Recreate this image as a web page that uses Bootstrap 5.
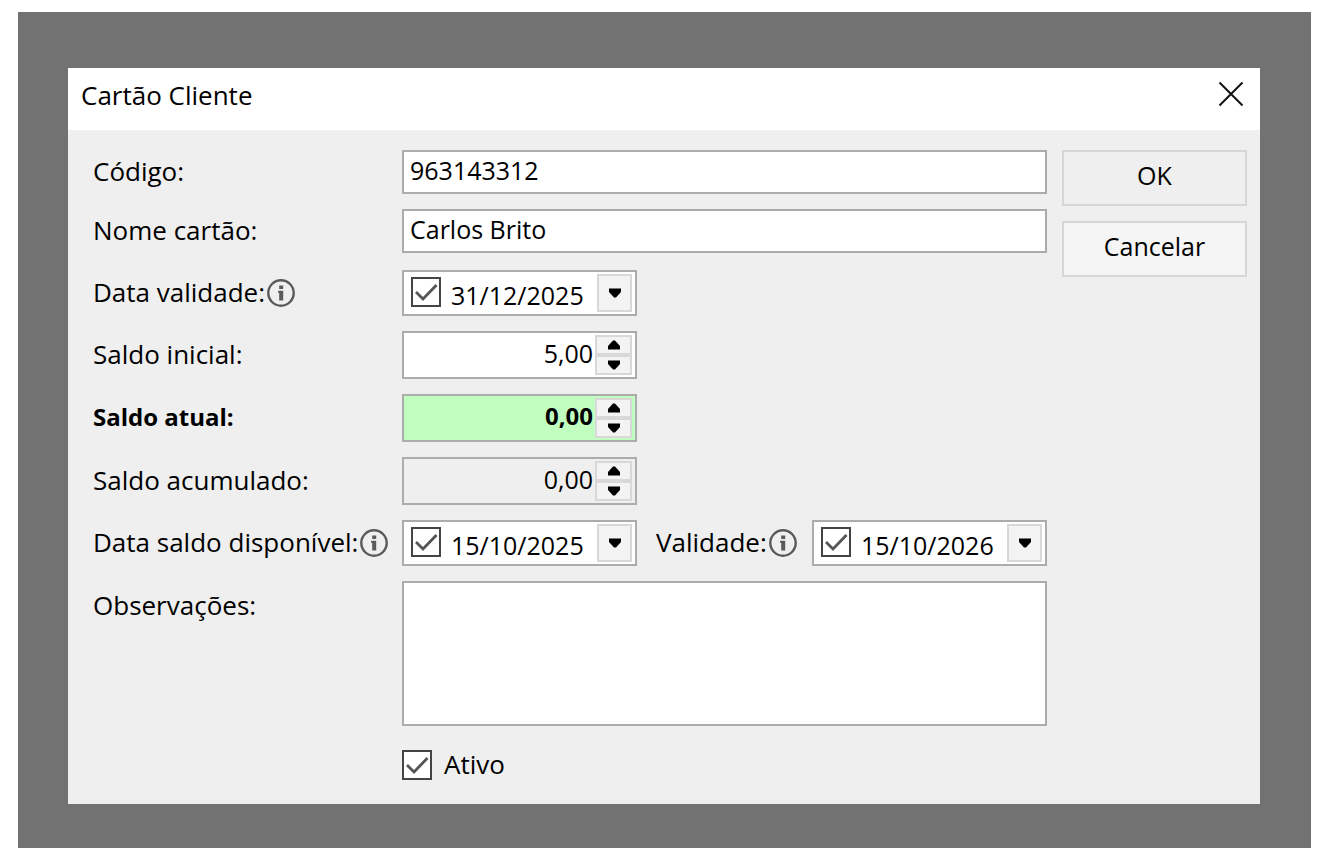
<!DOCTYPE html>
<html lang="pt">
<head>
<meta charset="utf-8">
<meta name="viewport" content="width=device-width, initial-scale=1">
<title>Cartão Cliente</title>
<link rel="stylesheet" href="https://cdn.jsdelivr.net/npm/bootstrap@5.3.0/dist/css/bootstrap.min.css">
<style>
  body { font-family: "Open Sans", "Noto Sans", sans-serif; font-size: 26px; line-height: 32px; color: #000; background: #fff; }
  .backdrop-area { background: #727272; margin: 12px 12px 12px 18px; padding: 56px 51px 44px 50px; }
  .dialog-window { background: #efefef; }
  .dialog-title { background: #fff; height: 62px; padding: 0 15px 9px 13px; }
  .dialog-title h1 { font-size: 26px; line-height: 32px; }
  .close-btn { line-height: 0; }
  .dialog-body { padding: 20px 13px 22px 25px; gap: 15px; }
  .form-rows { gap: 15px; min-width: 0; }
  .label-col { flex: 0 0 309px; white-space: nowrap; }
  .form-rows label { margin-bottom: 2px; }
  .label-strong { font-size: 24px; }
  .side-label { margin-left: 19px; white-space: nowrap; }
  .info-icon { width: 28px; height: 28px; margin-left: 2px; flex: none; }
  .form-control.win-input { height: 44px; padding: 0 6px 4px; font-size: 25px; line-height: 32px; color: #000; border: 2px solid #acacac; border-radius: 0; background: #fff; }
  textarea.form-control.win-input { height: 145px; resize: none; }
  .win-field { width: 235px; border: 2px solid #acacac; background: #fff; font-size: 25px; }
  .win-field input[type=text] { min-width: 0; flex: 1 1 0; border: 0; padding: 0; background: transparent; color: inherit; font: inherit; outline: 0; }
  .date-field { height: 46px; padding: 0 3px 0 7px; }
  .date-field input[type=text] { margin-left: 10px; padding-top: 3px; }
  .spin-field { height: 48px; padding: 0 3px; }
  .spin-field input[type=text] { text-align: right; padding: 0 2px 5px 0; }
  .current { background: #c0ffc0; font-size: 24px; }
  .readonly-field { background: #efefef; }
  .group-start { margin-top: 2px; }
  .form-check-input.win-check { width: 30px; height: 30px; margin: 0; border: 2px solid #444; border-radius: 0; background-color: #fff; flex: none; }
  .form-check-input.win-check:checked { background-color: #fff; border-color: #444; background-size: 26px 26px; background-image: url("data:image/svg+xml,%3Csvg xmlns='http://www.w3.org/2000/svg' viewBox='0 0 26 26'%3E%3Cpath d='M3 13l7 7L23.500 6' fill='none' stroke='%23555' stroke-width='2.800'/%3E%3C/svg%3E"); }
  .date-field .win-check { margin-bottom: 3px; }
  .small-btn { display: flex; align-items: center; justify-content: center; padding: 0; border: 2px solid #d8d8d8; border-radius: 0; background: #f3f3f3; }
  .drop-btn { width: 35px; height: 38px; }
  .spin-btn { width: 37px; height: 20px; }
  .btn.win-btn { width: 185px; height: 56px; padding: 0 0 7px; font-size: 25px; line-height: 32px; color: #000; border: 2px solid #d6d6d6; border-radius: 0; background: #efefef; }
  .btn.win-btn-light { background: #f5f5f5; }
  .active-line { margin-top: 7px; padding-left: 309px; gap: 12px; }
</style>
</head>
<body>
<svg class="d-none" aria-hidden="true">
  <symbol id="i-info" viewBox="0 0 28 28"><circle cx="14" cy="14" r="12.700" fill="none" stroke="#5a5a5a" stroke-width="2.400"/><path d="M12.200 6.500h4v3.500h-4zM11.200 11.800h5v9.700h-4v-7.500h-1z" fill="#5a5a5a"/></symbol>
  <symbol id="i-down" viewBox="0 0 12 10"><path d="M0 .5h12v3.500L7 9.500H5L0 4z"/></symbol>
  <symbol id="i-up" viewBox="0 0 12 10"><path d="M0 9.500h12V6L7 .5H5L0 6z"/></symbol>
</svg>
<main class="backdrop-area">
  <section class="dialog-window" role="dialog" aria-labelledby="dlg-title">
    <header class="dialog-title d-flex align-items-center justify-content-between">
      <h1 id="dlg-title" class="m-0 fw-normal">Cartão Cliente</h1>
      <button type="button" class="close-btn border-0 bg-transparent p-0" aria-label="Fechar">
        <svg width="28" height="30" viewBox="0 0 28 30"><path d="M2.500 2.500l23 23M25.500 2.500l-23 23" stroke="#111" stroke-width="2"/></svg>
      </button>
    </header>
    <form class="dialog-body d-flex align-items-start">
      <div class="form-rows flex-grow-1 d-flex flex-column">
        <div class="d-flex align-items-center">
          <label class="label-col" for="codigo">Código:</label>
          <input id="codigo" type="text" class="form-control win-input" value="963143312">
        </div>
        <div class="d-flex align-items-center">
          <label class="label-col" for="nome">Nome cartão:</label>
          <input id="nome" type="text" class="form-control win-input" value="Carlos Brito">
        </div>
        <div class="d-flex align-items-center group-start">
          <div class="label-col d-flex align-items-center"><label for="validade-cartao">Data validade:</label><svg class="info-icon"><use href="#i-info"/></svg></div>
          <div class="win-field date-field d-flex align-items-center">
            <input type="checkbox" class="form-check-input win-check" checked aria-label="Usar data validade">
            <input id="validade-cartao" type="text" value="31/12/2025">
            <button type="button" class="small-btn drop-btn" aria-label="Abrir calendário"><svg width="12" height="10"><use href="#i-down"/></svg></button>
          </div>
        </div>
        <div class="d-flex align-items-center">
          <label class="label-col" for="inicial">Saldo inicial:</label>
          <div class="win-field spin-field d-flex align-items-center">
            <input id="inicial" type="text" inputmode="decimal" value="5,00">
            <div><button type="button" class="small-btn spin-btn" aria-label="Aumentar"><svg width="12" height="10"><use href="#i-up"/></svg></button><button type="button" class="small-btn spin-btn" aria-label="Diminuir"><svg width="12" height="10"><use href="#i-down"/></svg></button></div>
          </div>
        </div>
        <div class="d-flex align-items-center fw-bold">
          <label class="label-col label-strong" for="atual">Saldo atual:</label>
          <div class="win-field spin-field current d-flex align-items-center">
            <input id="atual" type="text" inputmode="decimal" value="0,00">
            <div><button type="button" class="small-btn spin-btn" aria-label="Aumentar"><svg width="12" height="10"><use href="#i-up"/></svg></button><button type="button" class="small-btn spin-btn" aria-label="Diminuir"><svg width="12" height="10"><use href="#i-down"/></svg></button></div>
          </div>
        </div>
        <div class="d-flex align-items-center">
          <label class="label-col" for="acumulado">Saldo acumulado:</label>
          <div class="win-field spin-field readonly-field d-flex align-items-center">
            <input id="acumulado" type="text" inputmode="decimal" value="0,00" readonly>
            <div><button type="button" class="small-btn spin-btn" aria-label="Aumentar"><svg width="12" height="10"><use href="#i-up"/></svg></button><button type="button" class="small-btn spin-btn" aria-label="Diminuir"><svg width="12" height="10"><use href="#i-down"/></svg></button></div>
          </div>
        </div>
        <div class="d-flex align-items-center">
          <div class="label-col d-flex align-items-center"><label for="disponivel">Data saldo disponível:</label><svg class="info-icon"><use href="#i-info"/></svg></div>
          <div class="win-field date-field d-flex align-items-center">
            <input type="checkbox" class="form-check-input win-check" checked aria-label="Usar data saldo disponível">
            <input id="disponivel" type="text" value="15/10/2025">
            <button type="button" class="small-btn drop-btn" aria-label="Abrir calendário"><svg width="12" height="10"><use href="#i-down"/></svg></button>
          </div>
          <div class="side-label d-flex align-items-center"><label for="validade-saldo">Validade:</label><svg class="info-icon"><use href="#i-info"/></svg></div>
          <div class="win-field date-field d-flex align-items-center ms-auto">
            <input type="checkbox" class="form-check-input win-check" checked aria-label="Usar validade">
            <input id="validade-saldo" type="text" value="15/10/2026">
            <button type="button" class="small-btn drop-btn" aria-label="Abrir calendário"><svg width="12" height="10"><use href="#i-down"/></svg></button>
          </div>
        </div>
        <div class="d-flex align-items-start">
          <label class="label-col pt-2" for="obs">Observações:</label>
          <textarea id="obs" class="form-control win-input"></textarea>
        </div>
        <div class="active-line d-flex align-items-center">
          <input id="ativo" type="checkbox" class="form-check-input win-check" checked>
          <label for="ativo">Ativo</label>
        </div>
      </div>
      <div class="d-flex flex-column flex-shrink-0 form-rows">
        <button type="submit" class="btn win-btn">OK</button>
        <button type="button" class="btn win-btn win-btn-light">Cancelar</button>
      </div>
    </form>
  </section>
</main>
<script src="https://cdn.jsdelivr.net/npm/bootstrap@5.3.0/dist/js/bootstrap.bundle.min.js"></script>
</body>
</html>
